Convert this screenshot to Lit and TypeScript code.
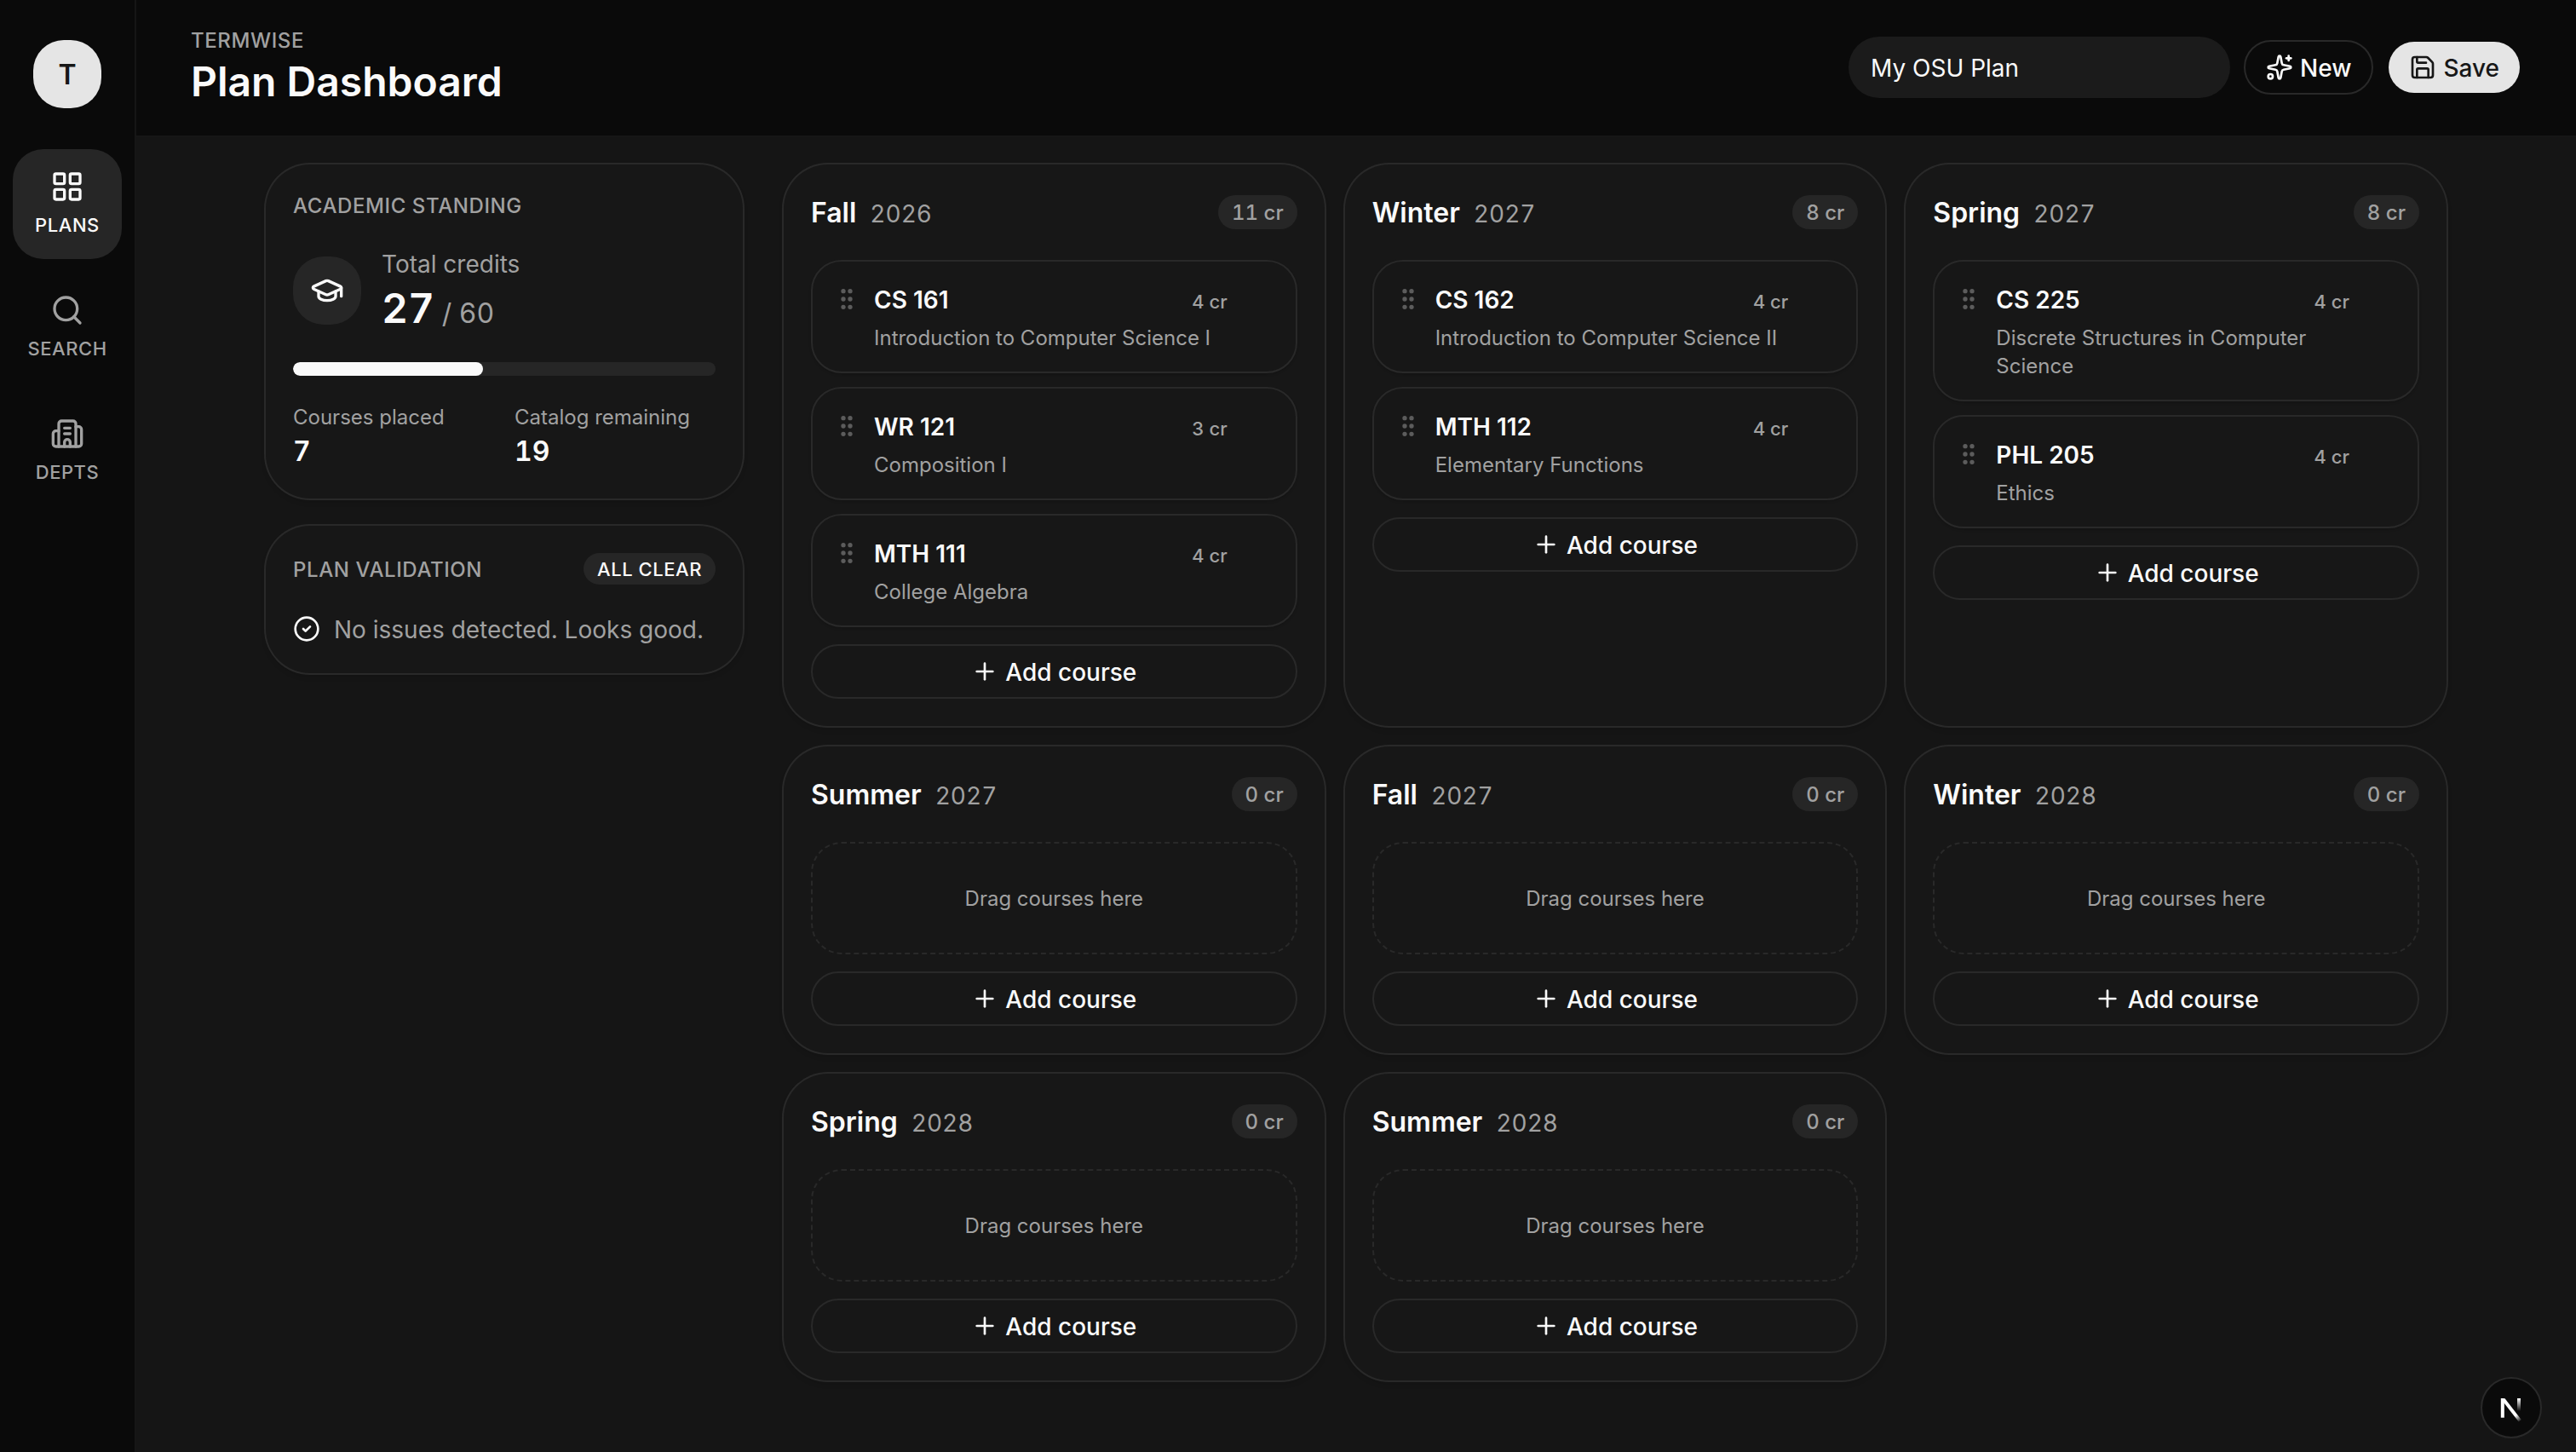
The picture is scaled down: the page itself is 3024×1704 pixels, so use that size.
import { LitElement, html, css, svg, nothing } from "lit";
import { customElement, property } from "lit/decorators.js";

interface Course { code: string; title: string; credits: number; }
interface Term { season: string; year: number; courses: Course[]; }

const TERMS: Term[] = [
  { season: "Fall", year: 2026, courses: [
    { code: "CS 161", title: "Introduction to Computer Science I", credits: 4 },
    { code: "WR 121", title: "Composition I", credits: 3 },
    { code: "MTH 111", title: "College Algebra", credits: 4 },
  ] },
  { season: "Winter", year: 2027, courses: [
    { code: "CS 162", title: "Introduction to Computer Science II", credits: 4 },
    { code: "MTH 112", title: "Elementary Functions", credits: 4 },
  ] },
  { season: "Spring", year: 2027, courses: [
    { code: "CS 225", title: "Discrete Structures in Computer Science", credits: 4 },
    { code: "PHL 205", title: "Ethics", credits: 4 },
  ] },
  { season: "Summer", year: 2027, courses: [] },
  { season: "Fall", year: 2027, courses: [] },
  { season: "Winter", year: 2028, courses: [] },
  { season: "Spring", year: 2028, courses: [] },
  { season: "Summer", year: 2028, courses: [] },
];

const CREDITS_REQUIRED = 60;
const CATALOG_SIZE = 26;

const sumCredits = (courses: Course[]) => courses.reduce((n, c) => n + c.credits, 0);

const ICONS = {
  grid: svg`<rect width="7" height="7" x="3" y="3" rx="1"/><rect width="7" height="7" x="14" y="3" rx="1"/><rect width="7" height="7" x="14" y="14" rx="1"/><rect width="7" height="7" x="3" y="14" rx="1"/>`,
  search: svg`<path d="m21 21-4.34-4.34"/><circle cx="11" cy="11" r="8"/>`,
  building: svg`<path d="M10 12h4"/><path d="M10 8h4"/><path d="M14 21v-3a2 2 0 0 0-4 0v3"/><path d="M6 10H4a2 2 0 0 0-2 2v7a2 2 0 0 0 2 2h16a2 2 0 0 0 2-2V9a2 2 0 0 0-2-2h-2"/><path d="M6 21V5a2 2 0 0 1 2-2h8a2 2 0 0 1 2 2v16"/>`,
  cap: svg`<path d="M21.42 10.922a1 1 0 0 0-.019-1.838L12.83 5.18a2 2 0 0 0-1.66 0L2.6 9.08a1 1 0 0 0 0 1.832l8.57 3.908a2 2 0 0 0 1.66 0z"/><path d="M22 10v6"/><path d="M6 12.5V16a6 3 0 0 0 12 0v-3.5"/>`,
  check: svg`<circle cx="12" cy="12" r="10"/><path d="m9 12 2 2 4-4"/>`,
  sparkles: svg`<path d="M11.017 2.814a1 1 0 0 1 1.966 0l1.051 5.558a2 2 0 0 0 1.594 1.594l5.558 1.051a1 1 0 0 1 0 1.966l-5.558 1.051a2 2 0 0 0-1.594 1.594l-1.051 5.558a1 1 0 0 1-1.966 0l-1.051-5.558a2 2 0 0 0-1.594-1.594l-5.558-1.051a1 1 0 0 1 0-1.966l5.558-1.051a2 2 0 0 0 1.594-1.594z"/><path d="M20 2v4"/><path d="M22 4h-4"/><circle cx="4" cy="20" r="2"/>`,
  save: svg`<path d="M15.2 3a2 2 0 0 1 1.4.6l3.8 3.8a2 2 0 0 1 .6 1.4V19a2 2 0 0 1-2 2H5a2 2 0 0 1-2-2V5a2 2 0 0 1 2-2z"/><path d="M17 21v-7a1 1 0 0 0-1-1H8a1 1 0 0 0-1 1v7"/><path d="M7 3v4a1 1 0 0 0 1 1h7"/>`,
  plus: svg`<path d="M5 12h14"/><path d="M12 5v14"/>`,
  grip: svg`<circle cx="9" cy="12" r="1"/><circle cx="9" cy="5" r="1"/><circle cx="9" cy="19" r="1"/><circle cx="15" cy="12" r="1"/><circle cx="15" cy="5" r="1"/><circle cx="15" cy="19" r="1"/>`,
};

const icon = (name: keyof typeof ICONS, size: number) => html`
  <svg width=${size} height=${size} viewBox="0 0 24 24" fill="none" stroke="currentColor"
    stroke-width="2" stroke-linecap="round" stroke-linejoin="round" aria-hidden="true">${ICONS[name]}</svg>`;

const shared = css`
  * { box-sizing: border-box; margin: 0; }
  svg { display: block; flex: none; }
  button { font: inherit; color: inherit; background: none; border: 0; }
  .card {
    background: #171717;
    border-radius: 52px;
    box-shadow: 0 0 0 2px #292929, 0 4px 6px rgba(0, 0, 0, 0.14);
    padding: 32px;
  }
  .btn {
    height: 64px;
    border: 2px solid #292929;
    border-radius: 32px;
    display: flex;
    align-items: center;
    justify-content: center;
    gap: 8px;
    padding: 0 24px;
    font-size: 28px;
    line-height: 40px;
    font-weight: 500;
    white-space: nowrap;
  }
  .btn-label { padding-top: 2px; }
`;

@customElement("nav-rail")
export class NavRail extends LitElement {
  static styles = [shared, css`
    :host {
      display: flex;
      flex-direction: column;
      align-items: center;
      width: 160px;
      flex: none;
      box-sizing: border-box;
      padding-top: 47px;
      background: #0a0a0a;
      border-right: 2px solid #161616;
    }
    .logo {
      width: 80px;
      height: 80px;
      margin-bottom: 48px;
      border-radius: 36px;
      background: #e5e5e5;
      color: #171717;
      display: grid;
      place-items: center;
      font-size: 32px;
      line-height: 49px;
      font-weight: 600;
    }
    .nav { display: flex; flex-direction: column; gap: 16px; }
    .item {
      width: 128px;
      display: flex;
      flex-direction: column;
      align-items: center;
      gap: 8px;
      padding: 24px 0 23px;
      border-radius: 36px;
      color: #a1a1a1;
      font-size: 22px;
      line-height: 34px;
      font-weight: 500;
      letter-spacing: 0.025em;
      text-transform: uppercase;
    }
    .active { background: #262626; color: #fafafa; }
  `];

  render() {
    return html`
      <div class="logo">T</div>
      <nav class="nav">
        <div class="item active">${icon("grid", 40)}<span>Plans</span></div>
        <div class="item">${icon("search", 40)}<span>Search</span></div>
        <div class="item">${icon("building", 40)}<span>Depts</span></div>
      </nav>`;
  }
}

@customElement("page-header")
export class PageHeader extends LitElement {
  static styles = [shared, css`
    :host {
      display: flex;
      align-items: flex-start;
      justify-content: space-between;
      box-sizing: border-box;
      height: 161px;
      padding: 31px 64px 0;
      background: #0a0a0a;
      border-bottom: 2px solid #161616;
    }
    .eyebrow {
      font-size: 24px;
      line-height: 33px;
      font-weight: 500;
      letter-spacing: 0.025em;
      color: #a1a1a1;
      text-transform: uppercase;
    }
    .title { font-size: 48px; line-height: 64px; font-weight: 600; }
    .actions { display: flex; align-items: center; gap: 16px; height: 96px; }
    .name {
      width: 448px;
      height: 72px;
      padding: 2px 26px 0;
      border-radius: 36px;
      background: #1b1b1b;
      display: flex;
      align-items: center;
      font-size: 28px;
      line-height: 40px;
    }
    .primary {
      border-color: transparent;
      background: #e5e5e5;
      background-clip: padding-box;
      color: #171717;
    }
  `];

  render() {
    return html`
      <div>
        <div class="eyebrow">Termwise</div>
        <h1 class="title">Plan Dashboard</h1>
      </div>
      <div class="actions">
        <div class="name">My OSU Plan</div>
        <button class="btn">${icon("sparkles", 32)}<span class="btn-label">New</span></button>
        <button class="btn primary">${icon("save", 32)}<span class="btn-label">Save</span></button>
      </div>`;
  }
}

@customElement("plan-summary")
export class PlanSummary extends LitElement {
  @property({ type: Number }) credits = 0;
  @property({ type: Number }) required = 0;
  @property({ type: Number }) placed = 0;
  @property({ type: Number }) remaining = 0;

  static styles = [shared, css`
    :host { display: flex; flex-direction: column; gap: 32px; }
    .card { display: flex; flex-direction: column; gap: 32px; }
    .heading {
      font-size: 24px;
      line-height: 33px;
      margin-bottom: -1px;
      font-weight: 500;
      letter-spacing: 0.025em;
      color: #a1a1a1;
      text-transform: uppercase;
    }
    .total { display: flex; align-items: center; gap: 24px; height: 104px; }
    .badge {
      width: 80px;
      height: 80px;
      border-radius: 36px;
      background: #262626;
      display: grid;
      place-items: center;
    }
    .figures { height: 104px; }
    .label { font-size: 28px; line-height: 42px; margin-bottom: -2px; color: #a1a1a1; }
    .value {
      font-size: 48px;
      line-height: 65px;
      font-weight: 600;
      font-variant-numeric: tabular-nums;
      white-space: nowrap;
    }
    .of { font-size: 32px; line-height: 32px; font-weight: 400; color: #a1a1a1; }
    .track { height: 16px; border-radius: 8px; background: #262626; overflow: hidden; }
    .fill { height: 100%; border-radius: 8px; background: #fafafa; }
    .stats { display: grid; grid-template-columns: 1fr 1fr; gap: 24px; height: 80px; }
    .stat-label {
      font-size: 24px;
      line-height: 33px;
      margin-bottom: -1px;
      color: #a1a1a1;
      white-space: nowrap;
    }
    .stat-value {
      font-size: 32px;
      line-height: 49px;
      font-weight: 600;
      font-variant-numeric: tabular-nums;
    }
    .row { display: flex; align-items: center; justify-content: space-between; height: 37px; }
    .pill {
      padding: 2px 16px 1px;
      border-radius: 20px;
      background: #262626;
      font-size: 22px;
      line-height: 34px;
      font-weight: 500;
      letter-spacing: 0.025em;
      text-transform: uppercase;
    }
    .status {
      display: flex;
      align-items: center;
      gap: 16px;
      height: 40px;
      font-size: 28px;
      line-height: 40px;
    }
    .muted { padding-top: 2px; color: #a1a1a1; white-space: nowrap; }
  `];

  render() {
    const percent = (this.credits / this.required) * 100;
    return html`
      <section class="card">
        <h2 class="heading">Academic Standing</h2>
        <div class="total">
          <div class="badge">${icon("cap", 40)}</div>
          <div class="figures">
            <div class="label">Total credits</div>
            <div class="value">${this.credits}<span class="of"> / ${this.required}</span></div>
          </div>
        </div>
        <div class="track"><div class="fill" style="width:${percent}%"></div></div>
        <div class="stats">
          <div>
            <div class="stat-label">Courses placed</div>
            <div class="stat-value">${this.placed}</div>
          </div>
          <div>
            <div class="stat-label">Catalog remaining</div>
            <div class="stat-value">${this.remaining}</div>
          </div>
        </div>
      </section>
      <section class="card">
        <div class="row">
          <h2 class="heading">Plan Validation</h2>
          <span class="pill">All clear</span>
        </div>
        <div class="status">${icon("check", 32)}<span class="muted">No issues detected. Looks good.</span></div>
      </section>`;
  }
}

@customElement("term-card")
export class TermCard extends LitElement {
  @property({ attribute: false }) term!: Term;

  static styles = [shared, css`
    :host { display: grid; min-width: 0; }
    .card { display: flex; flex-direction: column; }
    .head {
      display: flex;
      align-items: center;
      justify-content: space-between;
      height: 48px;
      margin-bottom: 32px;
    }
    .name { display: flex; align-items: baseline; gap: 16px; padding-top: 1px; }
    .season { font-size: 32px; line-height: 49px; font-weight: 600; }
    .year {
      font-size: 28px;
      line-height: 40px;
      color: #a1a1a1;
      font-variant-numeric: tabular-nums;
    }
    .pill {
      padding: 4px 16px 3px;
      border-radius: 20px;
      background: #262626;
      color: #a1a1a1;
      font-size: 24px;
      line-height: 33px;
      font-weight: 500;
      font-variant-numeric: tabular-nums;
    }
    .list { display: flex; flex-direction: column; gap: 16px; margin-bottom: 20px; }
    .course {
      display: flex;
      align-items: flex-start;
      padding: 24px 24px 23px;
      border: 2px solid #292929;
      border-radius: 36px;
      background: #171717;
      box-shadow: 0 2px 3px rgba(0, 0, 0, 0.14);
    }
    .grip { padding-top: 4px; margin-right: 16px; color: #5c5c5c; }
    .info { flex: 1; min-width: 0; margin-right: 56px; }
    .line { display: flex; align-items: baseline; justify-content: space-between; height: 42px; }
    .code { font-size: 28px; line-height: 42px; font-weight: 600; }
    .credits {
      font-size: 22px;
      line-height: 33px;
      font-weight: 500;
      color: #a1a1a1;
      font-variant-numeric: tabular-nums;
    }
    .title { margin-top: 7px; font-size: 24px; line-height: 33px; color: #a1a1a1; }
    .empty {
      display: grid;
      place-items: center;
      height: 132px;
      border: 2px dashed #292929;
      border-radius: 36px;
      font-size: 24px;
      color: #a1a1a1;
    }
  `];

  render() {
    const { season, year, courses } = this.term;
    return html`
      <section class="card">
        <header class="head">
          <div class="name"><span class="season">${season}</span><span class="year">${year}</span></div>
          <span class="pill">${sumCredits(courses)} cr</span>
        </header>
        <div class="list">
          ${courses.map((c) => html`
            <article class="course">
              <span class="grip">${icon("grip", 32)}</span>
              <div class="info">
                <div class="line"><span class="code">${c.code}</span><span class="credits">${c.credits} cr</span></div>
                <div class="title">${c.title}</div>
              </div>
            </article>`)}
          ${courses.length ? nothing : html`<div class="empty">Drag courses here</div>`}
        </div>
        <button class="btn">${icon("plus", 32)}<span class="btn-label">Add course</span></button>
      </section>`;
  }
}

@customElement("app-root")
export class AppRoot extends LitElement {
  static styles = [shared, css`
    :host {
      display: flex;
      width: 100%;
      height: 100vh;
      overflow: hidden;
      background: #151515;
      color: #fafafa;
      font-family: Inter, "Liberation Sans", sans-serif;
      font-size: 32px;
      -webkit-font-smoothing: antialiased;
    }
    .main { flex: 1; min-width: 0; }
    .content {
      width: 2560px;
      margin: 0 auto;
      padding-top: 32px;
      display: grid;
      grid-template-columns: 560px 1fr;
      align-items: start;
      gap: 48px;
    }
    .terms { display: grid; grid-template-columns: repeat(3, minmax(0, 1fr)); gap: 24px; }
    .dev {
      position: absolute;
      right: 40px;
      bottom: 16px;
      width: 72px;
      height: 72px;
      border: 2px solid #292929;
      border-radius: 50%;
      background: #0a0a0a;
    }
  `];

  render() {
    const placed = TERMS.flatMap((t) => t.courses);
    return html`
      <nav-rail></nav-rail>
      <main class="main">
        <page-header></page-header>
        <div class="content">
          <plan-summary
            .credits=${sumCredits(placed)}
            .required=${CREDITS_REQUIRED}
            .placed=${placed.length}
            .remaining=${CATALOG_SIZE - placed.length}
          ></plan-summary>
          <div class="terms">${TERMS.map((t) => html`<term-card .term=${t}></term-card>`)}</div>
        </div>
      </main>
      <div class="dev">
        <svg width="68" height="68" viewBox="0 0 68 68" fill="none" stroke-width="4" aria-hidden="true">
          <defs>
            <linearGradient id="diag" gradientUnits="userSpaceOnUse" x1="36" y1="38" x2="45" y2="50">
              <stop stop-color="#fff"/><stop offset="0.4" stop-color="#fff"/><stop offset="1" stop-color="#fff" stop-opacity="0"/>
            </linearGradient>
            <linearGradient id="stem" gradientUnits="userSpaceOnUse" x1="43" y1="23" x2="43" y2="38">
              <stop stop-color="#fff"/><stop offset="1" stop-color="#fff" stop-opacity="0"/>
            </linearGradient>
          </defs>
          <path d="M23.8 45.7V23" stroke="#fff"/>
          <path d="M24.8 24.2L44.3 49.4" stroke="url(#diag)"/>
          <path d="M43 23V40" stroke="url(#stem)"/>
        </svg>
      </div>`;
  }
}
